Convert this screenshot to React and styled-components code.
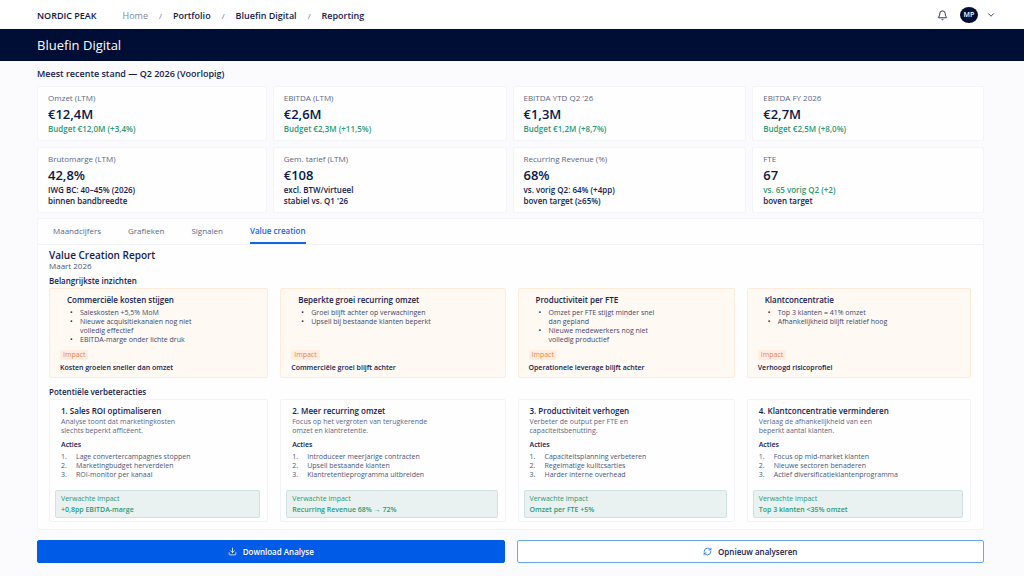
import React from 'react';
import styled, { createGlobalStyle } from 'styled-components';
import { Bell, ChevronDown, Download, RefreshCw } from 'lucide-react';

const GlobalStyle = createGlobalStyle`
  * {
    box-sizing: border-box;
  }

  body {
    margin: 0;
    background-color: #fbfbfd;
    color: #14204f;
    font-family: "Open Sans", "Liberation Sans", sans-serif;
    font-size: 8px;
    line-height: 9px;
  }

  h1, h2, h3, h4, p, ul, ol {
    margin: 0;
    padding: 0;
  }

  button {
    font-family: inherit;
    cursor: pointer;
  }
`;

const TopBar = styled.header`
  display: flex;
  align-items: center;
  height: 29px;
  padding: 1px 28px 0 37px;
  background-color: #ffffff;
`;

const Brand = styled.span`
  margin-right: 26px;
  color: #0b1748;
  font-size: 9px;
  font-weight: 600;
`;

const Breadcrumb = styled.nav`
  ol {
    display: flex;
    list-style: none;
  }

  li + li::before {
    content: '/';
    margin: 0 11px;
    color: #6a7392;
    font-weight: 400;
  }
`;

const Crumb = styled.a`
  color: ${props => (props.$muted ? '#8088a2' : '#14204f')};
  font-size: 9px;
  font-weight: ${props => (props.$muted ? 400 : 600)};
  text-decoration: none;
`;

const UserArea = styled.div`
  display: flex;
  align-items: center;
  gap: 8px;
  margin-left: auto;
`;

const IconButton = styled.button`
  display: flex;
  padding: 0;
  border: 0;
  background: none;
  color: #14204f;
`;

const Avatar = styled.span`
  width: 18px;
  height: 16px;
  margin-left: 4px;
  border-radius: 50%;
  background-color: #000d35;
  color: #ffffff;
  font-size: 7px;
  font-weight: 600;
  line-height: 16px;
  text-align: center;
`;

const TitleBar = styled.div`
  padding: 8px 37px;
  background-color: #000d35;

  h1 {
    color: #ffffff;
    font-size: 13px;
    font-weight: 500;
    line-height: 16px;
  }
`;

const Main = styled.main`
  padding: 8px 40px 13px 37px;
`;

const SectionTitle = styled.h2`
  margin-bottom: 7px;
  font-size: 9px;
  font-weight: 600;
  line-height: 10px;
`;

const KpiGrid = styled.section`
  display: grid;
  grid-template-columns: 230fr 234fr 234fr 232fr;
  gap: 6px;
  margin-bottom: 5px;
`;

const KpiCard = styled.article`
  padding: 6px 10px;
  border: 1px solid #f3f4f8;
  border-radius: 2px;
  background-color: #fefefe;
`;

const KpiLabel = styled.h3`
  color: #5c6685;
  font-size: 8px;
  font-weight: 400;
  line-height: 10px;
`;

const KpiValue = styled.p`
  margin-top: 2px;
  color: #0b1748;
  font-size: 13px;
  font-weight: 600;
  line-height: 18px;
`;

const KpiNote = styled.p`
  color: ${props => (props.$positive ? '#2c9a74' : '#14204f')};
  font-size: 8px;
  font-weight: 600;
  line-height: 11px;
`;

const Panel = styled.section`
  margin-bottom: 10px;
  border: 1px solid #f3f4f8;
  border-radius: 2px;
  background-color: #fefefe;
`;

const Tabs = styled.div`
  display: flex;
  gap: 27px;
  padding: 0 15px;
  border-bottom: 1px solid #f0f2f6;
`;

const Tab = styled.button`
  height: 25px;
  padding: 0;
  border: 0;
  border-bottom: 2px solid ${props => (props.$active ? '#1265ea' : 'transparent')};
  background: none;
  color: ${props => (props.$active ? '#1265ea' : '#5c6685')};
  font-size: 8px;
  font-weight: ${props => (props.$active ? 600 : 400)};
`;

const Report = styled.div`
  padding: 5px 12px 7px 11px;
`;

const ReportTitle = styled.h2`
  font-size: 10px;
  font-weight: 600;
  line-height: 11px;
`;

const ReportDate = styled.p`
  margin-bottom: 6px;
  color: #4b5678;
  line-height: 9px;
`;

const GroupTitle = styled.h3`
  margin-bottom: 2px;
  font-size: 8px;
  font-weight: 600;
  line-height: 10px;
`;

const CardGrid = styled.div`
  display: grid;
  grid-template-columns: 219fr 225fr 217fr 224fr;
  gap: 12px;

  & + ${GroupTitle} {
    margin-top: 9px;
  }
`;

const CardTitle = styled.h4`
  font-size: 8px;
  font-weight: 600;
  line-height: 12px;
`;

const InsightCard = styled.article`
  display: flex;
  flex-direction: column;
  align-items: flex-start;
  padding: 5px 10px;
  border: 1px solid #ffebd9;
  border-radius: 2px;
  background-color: #fff9f3;

  ${CardTitle} {
    margin-left: 7px;
  }
`;

const InsightList = styled.ul`
  margin: 2px 0 6px 20px;
  color: #3d486f;
  font-size: 7px;
  list-style: none;

  li::before {
    content: '•';
    float: left;
    margin-left: -10px;
    color: #14204f;
  }
`;

const ImpactTag = styled.span`
  margin-top: auto;
  padding: 0 3px;
  border-radius: 2px;
  background-color: #ffeee0;
  color: #e88450;
  font-size: 7px;
  font-weight: 500;
  line-height: 10px;
`;

const ImpactText = styled.p`
  margin-top: 3px;
  font-size: 7px;
  font-weight: 600;
`;

const ActionCard = styled.article`
  display: flex;
  flex-direction: column;
  padding: 5px 7px 3px 5px;
  border: 1px solid #f2f3f7;
  border-radius: 2px;
`;

const ActionBody = styled.div`
  padding: 0 6px;
  font-size: 7px;
`;

const ActionText = styled.p`
  color: #5c6685;
`;

const ActionLabel = styled.p`
  margin-top: 5px;
  font-weight: 600;
`;

const ActionList = styled.ol`
  margin-top: 3px;
  color: #4b5678;
  counter-reset: action;
  list-style: none;

  li {
    display: flex;
    counter-increment: action;
  }

  li::before {
    content: counter(action) '.';
    width: 15px;
  }
`;

const ExpectedImpact = styled.div`
  margin-top: 11px;
  padding: 3px 6px 3px 5px;
  border: 1px solid #d0e3e2;
  border-radius: 2px;
  background-color: #e9f1f1;
  color: #2c9a74;
  font-size: 7px;

  strong {
    display: block;
    margin-top: 2px;
    font-weight: 600;
  }
`;

const Actions = styled.div`
  display: grid;
  grid-template-columns: 1fr 1fr;
  gap: 12px;
`;

const ActionButton = styled.button`
  display: flex;
  align-items: center;
  justify-content: center;
  gap: 6px;
  height: 23px;
  border: 1px solid ${props => (props.$primary ? '#005ce6' : '#6aa5f5')};
  border-radius: 2px;
  background-color: ${props => (props.$primary ? '#005ce6' : '#ffffff')};
  color: ${props => (props.$primary ? '#ffffff' : '#14204f')};
  font-size: 8px;
  font-weight: 600;

  svg {
    color: ${props => (props.$primary ? '#ffffff' : '#1265ea')};
  }
`;

const kpis = [
  { label: 'Omzet (LTM)', value: '€12,4M', notes: [{ text: 'Budget €12,0M (+3,4%)', positive: true }] },
  { label: 'EBITDA (LTM)', value: '€2,6M', notes: [{ text: 'Budget €2,3M (+11,5%)', positive: true }] },
  { label: "EBITDA YTD Q2 '26", value: '€1,3M', notes: [{ text: 'Budget €1,2M (+8,7%)', positive: true }] },
  { label: 'EBITDA FY 2026', value: '€2,7M', notes: [{ text: 'Budget €2,5M (+8,0%)', positive: true }] },
  { label: 'Brutomarge (LTM)', value: '42,8%', notes: [{ text: 'IWG BC: 40–45% (2026)' }, { text: 'binnen bandbreedte' }] },
  { label: 'Gem. tarief (LTM)', value: '€108', notes: [{ text: 'excl. BTW/virtueel' }, { text: "stabiel vs. Q1 '26" }] },
  { label: 'Recurring Revenue (%)', value: '68%', notes: [{ text: 'vs. vorig Q2: 64% (+4pp)' }, { text: 'boven target (≥65%)' }] },
  { label: 'FTE', value: '67', notes: [{ text: 'vs. 65 vorig Q2 (+2)', positive: true }, { text: 'boven target' }] },
];

const tabs = ['Maandcijfers', 'Grafieken', 'Signalen', 'Value creation'];

const insights = [
  {
    title: 'Commerciële kosten stijgen',
    points: ['Saleskosten +5,5% MoM', <>Nieuwe acquisitiekanalen nog niet<br />volledig effectief</>, 'EBITDA-marge onder lichte druk'],
    impact: 'Kosten groeien sneller dan omzet',
  },
  {
    title: 'Beperkte groei recurring omzet',
    points: ['Groei blijft achter op verwachingen', 'Upsell bij bestaande klanten beperkt'],
    impact: 'Commerciële groei blijft achter',
  },
  {
    title: 'Productiviteit per FTE',
    points: [<>Omzet per FTE stijgt minder snel<br />dan gepland</>, <>Nieuwe medewerkers nog niet<br />volledig productief</>],
    impact: 'Operationele leverage blijft achter',
  },
  {
    title: 'Klantconcentratie',
    points: ['Top 3 klanten = 41% omzet', 'Afhankelijkheid blijft relatief hoog'],
    impact: 'Verhoogd risicoprofiel',
  },
];

const improvements = [
  {
    title: '1. Sales ROI optimaliseren',
    text: <>Analyse toont dat marketingkosten<br />slechts beperkt afficëent.</>,
    steps: ['Lage convertercampagnes stoppen', 'Marketingbudget herverdelen', 'ROI-monitor per kanaal'],
    impact: '+0,8pp EBITDA-marge',
  },
  {
    title: '2. Meer recurring omzet',
    text: <>Focus op het vergroten van terugkerende<br />omzet en klantretentie.</>,
    steps: ['Introduceer meerjarige contracten', 'Upsell bestaande klanten', 'Klantretentieprogramma uitbreiden'],
    impact: 'Recurring Revenue 68% → 72%',
  },
  {
    title: '3. Productiviteit verhogen',
    text: <>Verbeter de output per FTE en<br />capaciteitsbenutting.</>,
    steps: ['Capaciteitsplanning verbeteren', 'Regelmatige kulltcsarties', 'Harder interne overhead'],
    impact: 'Omzet per FTE +5%',
  },
  {
    title: '4. Klantconcentratie verminderen',
    text: <>Verlaag de afhankelijkheid van een<br />beperkt aantal klanten.</>,
    steps: ['Focus op mid-market klanten', 'Nieuwe sectoren benaderen', 'Actief diversificatieklantenprogramma'],
    impact: 'Top 3 klanten <35% omzet',
  },
];

const App = () => (
  <>
    <GlobalStyle />
    <TopBar>
      <Brand>NORDIC PEAK</Brand>
      <Breadcrumb aria-label="Breadcrumb">
        <ol>
          <li><Crumb href="#home" $muted>Home</Crumb></li>
          <li><Crumb href="#portfolio">Portfolio</Crumb></li>
          <li><Crumb href="#bluefin">Bluefin Digital</Crumb></li>
          <li><Crumb href="#reporting">Reporting</Crumb></li>
        </ol>
      </Breadcrumb>
      <UserArea>
        <IconButton aria-label="Meldingen"><Bell size={11} /></IconButton>
        <Avatar>MP</Avatar>
        <IconButton aria-label="Accountmenu"><ChevronDown size={10} /></IconButton>
      </UserArea>
    </TopBar>
    <TitleBar>
      <h1>Bluefin Digital</h1>
    </TitleBar>
    <Main>
      <SectionTitle>Meest recente stand — Q2 2026 (Voorlopig)</SectionTitle>
      <KpiGrid>
        {kpis.map(kpi => (
          <KpiCard key={kpi.label}>
            <KpiLabel>{kpi.label}</KpiLabel>
            <KpiValue>{kpi.value}</KpiValue>
            {kpi.notes.map(note => (
              <KpiNote key={note.text} $positive={note.positive}>{note.text}</KpiNote>
            ))}
          </KpiCard>
        ))}
      </KpiGrid>
      <Panel>
        <Tabs role="tablist">
          {tabs.map(tab => (
            <Tab key={tab} role="tab" aria-selected={tab === 'Value creation'} $active={tab === 'Value creation'}>
              {tab}
            </Tab>
          ))}
        </Tabs>
        <Report>
          <ReportTitle>Value Creation Report</ReportTitle>
          <ReportDate>Maart 2026</ReportDate>
          <GroupTitle>Belangrijkste inzichten</GroupTitle>
          <CardGrid>
            {insights.map(insight => (
              <InsightCard key={insight.title}>
                <CardTitle>{insight.title}</CardTitle>
                <InsightList>
                  {insight.points.map((point, i) => <li key={i}>{point}</li>)}
                </InsightList>
                <ImpactTag>Impact</ImpactTag>
                <ImpactText>{insight.impact}</ImpactText>
              </InsightCard>
            ))}
          </CardGrid>
          <GroupTitle>Potentiële verbeteracties</GroupTitle>
          <CardGrid>
            {improvements.map(item => (
              <ActionCard key={item.title}>
                <ActionBody>
                  <CardTitle>{item.title}</CardTitle>
                  <ActionText>{item.text}</ActionText>
                  <ActionLabel>Acties</ActionLabel>
                  <ActionList>
                    {item.steps.map(step => <li key={step}>{step}</li>)}
                  </ActionList>
                </ActionBody>
                <ExpectedImpact>
                  Verwachte impact
                  <strong>{item.impact}</strong>
                </ExpectedImpact>
              </ActionCard>
            ))}
          </CardGrid>
        </Report>
      </Panel>
      <Actions>
        <ActionButton $primary><Download size={9} />Download Analyse</ActionButton>
        <ActionButton><RefreshCw size={9} />Opnieuw analyseren</ActionButton>
      </Actions>
    </Main>
  </>
);

export default App;
